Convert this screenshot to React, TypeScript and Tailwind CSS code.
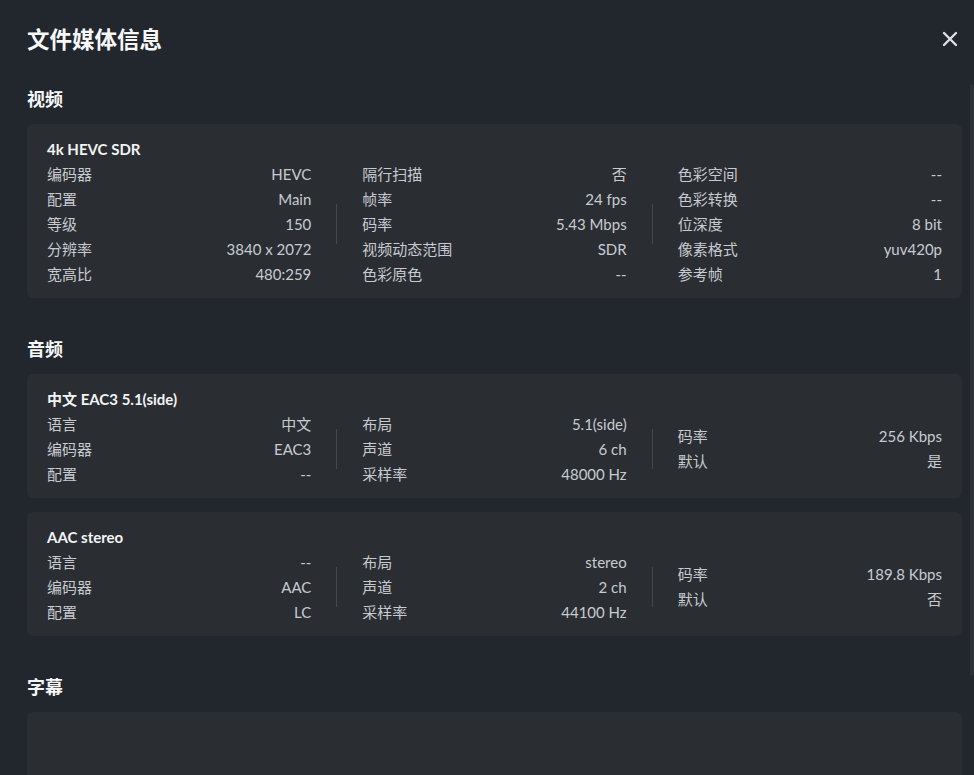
import React from "react";

type Row = [string, string];

const FONT = {
  fontFamily: 'Lato, "Noto Sans CJK SC", "Liberation Sans", sans-serif',
};

function Column({ rows }: { rows: Row[] }) {
  return (
    <div className="flex-1 flex flex-col justify-center">
      {rows.map(([k, v]) => (
        <div key={k} className="flex justify-between h-[25px] items-center pt-px">
          <span>{k}</span>
          <span>{v}</span>
        </div>
      ))}
    </div>
  );
}

function Divider() {
  return (
    <div className="self-center w-px h-[40px] bg-[#43484f] mx-[25px]" />
  );
}

function StreamCard({ title, cols }: { title: string; cols: Row[][] }) {
  return (
    <div className="rounded-md bg-[#2a2e33] px-5 py-3">
      <div className="h-[25px] flex items-center pt-px text-[15px] font-bold text-[#f2f3f5]">
        {title}
      </div>
      <div className="flex text-[15px] text-[#c7cbd0]">
        {cols.map((c, i) => (
          <React.Fragment key={i}>
            {i > 0 && <Divider />}
            <Column rows={c} />
          </React.Fragment>
        ))}
      </div>
    </div>
  );
}

function Section({
  title,
  children,
  first,
}: {
  title: string;
  children: React.ReactNode;
  first?: boolean;
}) {
  return (
    <section className={first ? "mt-[6px]" : "mt-[38px]"}>
      <h2 className="h-[26px] flex items-center text-[18px] font-bold text-[#f5f6f7] mb-3">
        {title}
      </h2>
      <div className="flex flex-col gap-[14px]">{children}</div>
    </section>
  );
}

export default function App() {
  return (
    <div
      className="w-[974px] h-[775px] overflow-hidden bg-[#22262d] flex"
      style={FONT}
    >
      <div className="flex-1 pl-[27px] pr-[8px]">
        <header className="h-[80px] flex items-center justify-between">
          <h1 className="text-[22.5px] font-bold text-[#f7f8f9]">文件媒体信息</h1>
          <svg
            width="16"
            height="16"
            viewBox="0 0 16 16"
            className="mr-[4px] mt-[-2px]"
          >
            <path
              d="M2 2 L14 14 M14 2 L2 14"
              stroke="#dde1e6"
              strokeWidth="2.4"
              strokeLinecap="round"
            />
          </svg>
        </header>

        <Section title="视频" first>
          <StreamCard
            title="4k HEVC SDR"
            cols={[
              [
                ["编码器", "HEVC"],
                ["配置", "Main"],
                ["等级", "150"],
                ["分辨率", "3840 x 2072"],
                ["宽高比", "480:259"],
              ],
              [
                ["隔行扫描", "否"],
                ["帧率", "24 fps"],
                ["码率", "5.43 Mbps"],
                ["视频动态范围", "SDR"],
                ["色彩原色", "--"],
              ],
              [
                ["色彩空间", "--"],
                ["色彩转换", "--"],
                ["位深度", "8 bit"],
                ["像素格式", "yuv420p"],
                ["参考帧", "1"],
              ],
            ]}
          />
        </Section>

        <Section title="音频">
          <StreamCard
            title="中文 EAC3 5.1(side)"
            cols={[
              [
                ["语言", "中文"],
                ["编码器", "EAC3"],
                ["配置", "--"],
              ],
              [
                ["布局", "5.1(side)"],
                ["声道", "6 ch"],
                ["采样率", "48000 Hz"],
              ],
              [
                ["码率", "256 Kbps"],
                ["默认", "是"],
              ],
            ]}
          />
          <StreamCard
            title="AAC stereo"
            cols={[
              [
                ["语言", "--"],
                ["编码器", "AAC"],
                ["配置", "LC"],
              ],
              [
                ["布局", "stereo"],
                ["声道", "2 ch"],
                ["采样率", "44100 Hz"],
              ],
              [
                ["码率", "189.8 Kbps"],
                ["默认", "否"],
              ],
            ]}
          />
        </Section>

        <Section title="字幕">
          <div className="rounded-md bg-[#2a2e33] h-[120px]" />
        </Section>
      </div>

      {/* scroll track */}
      <div className="w-[4px] flex flex-col">
        <div className="mt-[84px] h-[592px] rounded-full bg-[#2e3238]" />
      </div>
    </div>
  );
}
